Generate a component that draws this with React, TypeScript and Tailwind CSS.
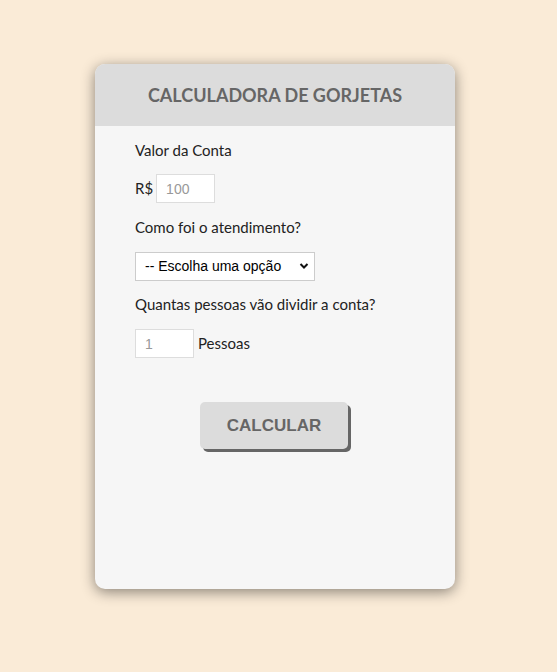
import React from "react";

export default function App() {
  return (
    <div className="min-h-[672px] w-full bg-[#faebd7] pt-[64px]" style={{ fontFamily: "Lato, 'Noto Sans', sans-serif" }}>
      <div className="ml-[95px] w-[360px] h-[525px] rounded-[10px] bg-[#f6f6f6] overflow-hidden shadow-[0_3px_14px_rgba(0,0,0,0.45)]">
        <div className="h-[62px] bg-[#dcdcdc] flex items-center justify-center">
          <h1 className="text-[18px] font-bold text-[#666666]">CALCULADORA DE GORJETAS</h1>
        </div>
        <div className="pl-[40px] pt-[15px] text-[15px] text-[#222222]">
          <p className="h-[18px] leading-[18px]">Valor da Conta</p>
          <div className="mt-[15px] flex items-center gap-[3px]">
            <span>R$</span>
            <input
              type="number"
              placeholder="100"
              className="w-[59px] h-[29px] bg-white border border-[#dddddd] pl-[9px] text-[14px] placeholder:text-[#999999] outline-none"
              style={{ fontFamily: "'Liberation Sans', Arial, sans-serif" }}
            />
          </div>
          <p className="mt-[15px] h-[18px] leading-[18px]">Como foi o atendimento?</p>
          <div className="mt-[16px] relative w-[180px] h-[29px]">
            <select
              className="appearance-none w-full h-full bg-white border border-[#cccccc] pl-[9px] text-[14px] text-black outline-none"
              style={{ fontFamily: "'Liberation Sans', Arial, sans-serif" }}
              defaultValue=""
            >
              <option value="">-- Escolha uma opção</option>
            </select>
            <svg className="absolute right-[6px] top-[10px] pointer-events-none" width="10" height="8" viewBox="0 0 10 8">
              <path d="M1.5 2 L5 5.5 L8.5 2" fill="none" stroke="#111" strokeWidth="2" />
            </svg>
          </div>
          <p className="mt-[14px] h-[18px] leading-[18px]">Quantas pessoas vão dividir a conta?</p>
          <div className="mt-[16px] flex items-center gap-[4px]">
            <input
              type="number"
              placeholder="1"
              className="w-[59px] h-[29px] bg-white border border-[#dddddd] pl-[9px] text-[14px] placeholder:text-[#999999] outline-none"
              style={{ fontFamily: "'Liberation Sans', Arial, sans-serif" }}
            />
            <span>Pessoas</span>
          </div>
        </div>
        <div className="mt-[44px] flex justify-center pr-[2px]">
          <button
            className="w-[148px] h-[47px] rounded-[5px] bg-[#dcdcdc] text-[#666666] text-[17px] font-bold shadow-[3px_3px_0_#666666]"
            style={{ fontFamily: "'Liberation Sans', Arial, sans-serif" }}
          >
            CALCULAR
          </button>
        </div>
      </div>
    </div>
  );
}
